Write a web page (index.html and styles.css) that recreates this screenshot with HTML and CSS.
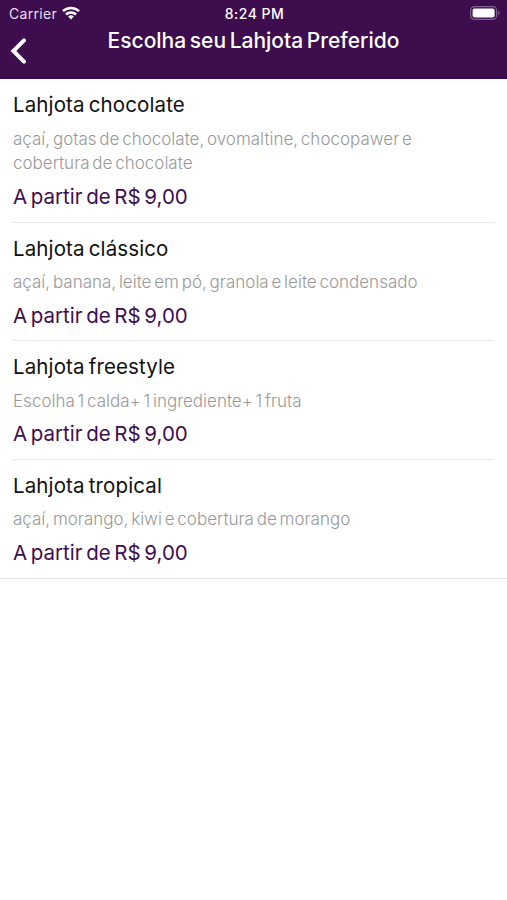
FILE: index.html
```html
<!DOCTYPE html>
<html lang="pt-BR">
<head>
<meta charset="utf-8">
<meta name="viewport" content="width=device-width, initial-scale=1">
<title>Escolha seu Lahjota Preferido</title>
<link rel="stylesheet" href="styles.css">
</head>
<body>
<header class="header">
  <div class="status">
    <div class="status-left"><span class="carrier">Carrier</span>
      <svg class="wifi" viewBox="0 0 18 14" width="18" height="14"><g fill="none" stroke="#fff" stroke-width="2.5"><path d="M1 5.2a11.5 11.5 0 0 1 16 0"/><path d="M4 8.5a7.2 7.2 0 0 1 10 0"/></g><path d="M9 13.4 6.1 10.6a4.2 4.2 0 0 1 5.8 0z" fill="#fff"/></svg>
    </div>
    <span class="time">8:24 PM</span>
    <div class="status-right"><svg width="30" height="14" viewBox="0 0 30 14"><rect x=".6" y=".6" width="26" height="12.8" rx="3.8" fill="none" stroke="#80608d" stroke-width="1.2"/><rect x="2.6" y="2.6" width="22" height="8.8" rx="2" fill="#fff"/><path d="M28 4.8q1.6.8 1.6 2.2T28 9.2z" fill="#80608d"/></svg></div>
  </div>
  <div class="nav">
    <svg class="back" width="16" height="26" viewBox="0 0 16 26"><path d="M14 2.4 3.4 13 14 23.6" fill="none" stroke="#fff" stroke-width="4" stroke-linecap="round"/></svg>
    <h1 class="title">Escolha seu Lahjota Preferido</h1>
  </div>
</header>
<main class="list">
  <article class="item"><h2 class="name">Lahjota chocolate</h2><p class="desc">açaí, gotas de chocolate, ovomaltine, chocopawer e<br>cobertura de chocolate</p><p class="price">A partir de R$ 9,00</p></article>
  <article class="item"><h2 class="name">Lahjota clássico</h2><p class="desc">açaí, banana, leite em pó, granola e leite condensado</p><p class="price">A partir de R$ 9,00</p></article>
  <article class="item"><h2 class="name">Lahjota freestyle</h2><p class="desc">Escolha 1 calda+ 1 ingrediente+ 1 fruta</p><p class="price">A partir de R$ 9,00</p></article>
  <article class="item"><h2 class="name">Lahjota tropical</h2><p class="desc">açaí, morango, kiwi e cobertura de morango</p><p class="price">A partir de R$ 9,00</p></article>
</main>
</body>
</html>
```
FILE: styles.css
```css
* { box-sizing: border-box; }
body { margin: 0; background: #fff; font-family: Inter, "Liberation Sans", sans-serif; }
.header { height: 79px; background: #3d0d4e; color: #fff; }
.status { height: 26px; display: grid; grid-template-columns: 1fr auto 1fr; align-items: center; padding: 0 7px 0 9px; font-size: 14px; }
.status-left { display: flex; align-items: center; gap: 5px; }
.carrier { letter-spacing: .3px; color: #eadff0; }
.wifi, .status-right svg, .back { display: block; }
.time { font-weight: 500; letter-spacing: .5px; }
.status-right { display: flex; justify-content: flex-end; }
.nav { display: grid; grid-template-columns: 16px 1fr 16px; padding: 0 10px; }
.back { margin-top: 12px; }
.title { margin: 0; text-align: center; font-size: 21px; font-weight: 500; line-height: 30px; letter-spacing: 0; word-spacing: -2px; white-space: nowrap; }
.list { border-bottom: 1px solid #e2e2e2; }
.item { margin: 0 13px; padding-top: 12px; height: 118.6px; border-bottom: 1px solid #e6e6e6; white-space: nowrap; }
.item:first-child { height: 143.5px; }
.item:last-child { height: 118.2px; border-bottom: 0; }
.name, .price { margin: 0; font-size: 20.5px; line-height: 28px; font-weight: 400; }
.name { color: #111; letter-spacing: .12px; word-spacing: -1.8px; }
.desc { margin: 7.5px 0 7px; font-size: 17px; line-height: 24.5px; font-weight: 300; color: #999; word-spacing: -2px; }
.price { color: #3d0d4e; word-spacing: -2.1px; }
```
